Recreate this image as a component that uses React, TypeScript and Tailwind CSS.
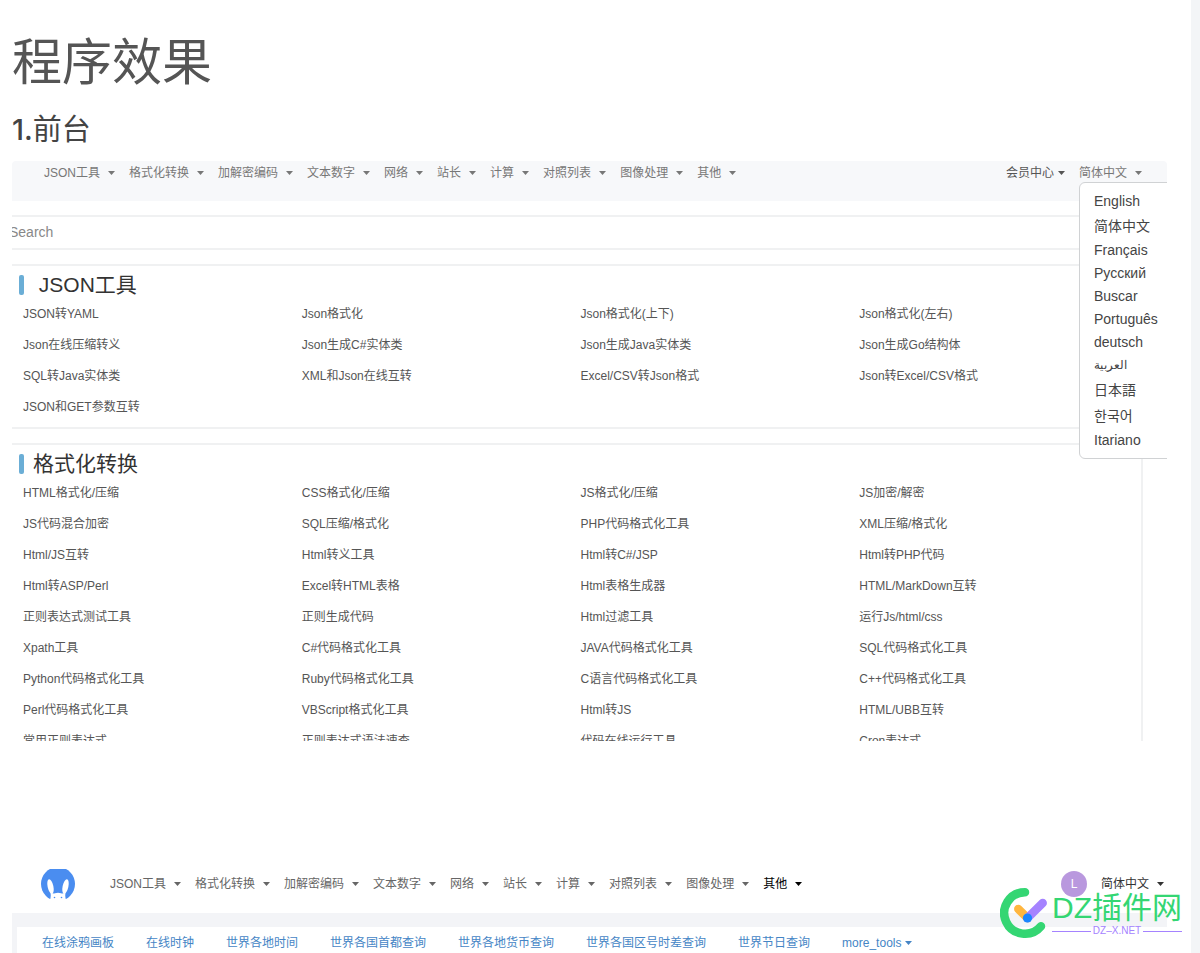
import React from 'react';

type Lang = { label: string; code: string };

const menus = ['JSON工具', '格式化转换', '加解密编码', '文本数字', '网络', '站长', '计算', '对照列表', '图像处理', '其他'];

const languages: Lang[] = [
  { label: 'English', code: 'en' },
  { label: '简体中文', code: 'zh' },
  { label: 'Français', code: 'fr' },
  { label: 'Русский', code: 'ru' },
  { label: 'Buscar', code: 'es' },
  { label: 'Português', code: 'pt' },
  { label: 'deutsch', code: 'de' },
  { label: 'العربية', code: 'ar' },
  { label: '日本語', code: 'ja' },
  { label: '한국어', code: 'ko' },
  { label: 'Itariano', code: 'it' },
];

const jsonTools = [
  'JSON转YAML', 'Json格式化', 'Json格式化(上下)', 'Json格式化(左右)',
  'Json在线压缩转义', 'Json生成C#实体类', 'Json生成Java实体类', 'Json生成Go结构体',
  'SQL转Java实体类', 'XML和Json在线互转', 'Excel/CSV转Json格式', 'Json转Excel/CSV格式',
  'JSON和GET参数互转',
];

const formatTools = [
  'HTML格式化/压缩', 'CSS格式化/压缩', 'JS格式化/压缩', 'JS加密/解密',
  'JS代码混合加密', 'SQL压缩/格式化', 'PHP代码格式化工具', 'XML压缩/格式化',
  'Html/JS互转', 'Html转义工具', 'Html转C#/JSP', 'Html转PHP代码',
  'Html转ASP/Perl', 'Excel转HTML表格', 'Html表格生成器', 'HTML/MarkDown互转',
  '正则表达式测试工具', '正则生成代码', 'Html过滤工具', '运行Js/html/css',
  'Xpath工具', 'C#代码格式化工具', 'JAVA代码格式化工具', 'SQL代码格式化工具',
  'Python代码格式化工具', 'Ruby代码格式化工具', 'C语言代码格式化工具', 'C++代码格式化工具',
  'Perl代码格式化工具', 'VBScript格式化工具', 'Html转JS', 'HTML/UBB互转',
  '常用正则表达式', '正则表达式语法速查', '代码在线运行工具', 'Cron表达式',
];

const otherTools = [
  '在线涂鸦画板', '在线时钟', '世界各地时间', '世界各国首都查询',
  '世界各地货币查询', '世界各国区号时差查询', '世界节日查询',
];

const Caret: React.FC = () => (
  <svg className="h-1 w-[7px] shrink-0" viewBox="0 0 7 4" fill="currentColor" aria-hidden>
    <path d="M0 0h7L3.5 4z" />
  </svg>
);

const Menus: React.FC<{ active?: string }> = ({ active }) => (
  <nav className="flex gap-[14px]">
    {menus.map((m) => (
      <button
        key={m}
        type="button"
        className={`flex items-center gap-2 whitespace-nowrap ${m === active ? 'text-black' : ''}`}
      >
        {m}
        <Caret />
      </button>
    ))}
  </nav>
);

const ToolCard: React.FC<{ title: string; tools: string[] }> = ({ title, tools }) => (
  <section className="mr-6 mb-[14px] border-y-2 border-r-2 border-[#f0f1f2] pt-1 pb-1">
    <h3 className="flex items-center gap-[9px] pl-[7px] text-[21px] leading-[29px] whitespace-pre text-[#333]">
      <span className="h-5 w-[5px] rounded-xs bg-[#6baed6]" />
      {title}
    </h3>
    <ul className="grid grid-cols-4 pr-[3px] pl-[11px] text-xs leading-[31px] text-[#555]">
      {tools.map((t) => (
        <li key={t}>
          <a href="#">{t}</a>
        </li>
      ))}
    </ul>
  </section>
);

const RabbitLogo: React.FC = () => (
  <svg className="h-[30px] w-[34px] shrink-0" viewBox="0 0 34 30" role="img" aria-label="Logo">
    <circle cx="17" cy="15" r="17" fill="#4a8df0" />
    <ellipse cx="9.5" cy="17.500" rx="2.900" ry="7.500" fill="#fff" transform="rotate(-12 9.5 17.500)" />
    <ellipse cx="24.500" cy="17.500" rx="2.900" ry="7.500" fill="#fff" transform="rotate(12 24.500 17.500)" />
    <path fill="#fff" d="M9 22Q11 25.500 14 24.300Q17 23.300 20 24.300Q23 25.500 25 22Q23.500 26 25 31H9Q10.500 26 9 22Z" />
    <circle cx="13.500" cy="28.500" r=".8" fill="#4a8df0" />
    <circle cx="20.500" cy="28.500" r=".8" fill="#4a8df0" />
  </svg>
);

const Watermark: React.FC = () => (
  <div className="absolute right-[9px] bottom-[14px] flex items-center gap-[1px]">
    <svg className="h-[52px] w-[51px]" viewBox="0 0 51 52" fill="none" strokeLinecap="round" strokeWidth="8.500" aria-hidden>
      <path stroke="#34d673" d="M25 5.200A20.800 20.800 0 1 0 41 39.300" />
      <path stroke="#ffb63f" d="M18.300 22l9.200 9" />
      <path stroke="#a583ff" d="M42.700 16l-15.200 15" />
      <circle cx="27.500" cy="31" r="4.600" fill="#1a86ff" />
    </svg>
    <div>
      <p className="text-[30px] leading-9 whitespace-nowrap text-[#34d673]">DZ插件网</p>
      <p className="flex items-center gap-0.5 text-[10px] leading-[10px] whitespace-nowrap text-[#a583ff]">
        <span className="h-px flex-1 bg-[#a583ff]" />
        DZ–X.NET
        <span className="h-px flex-1 bg-[#a583ff]" />
      </p>
    </div>
  </div>
);

const App: React.FC = () => {
  return (
    <div className="relative h-screen overflow-hidden border-r-[9px] border-[#f3f5f7] bg-white pr-6 pl-3 font-['Liberation_Sans','Noto_Sans_CJK_SC',sans-serif]">
      <h1 className="pt-[26px] text-[50px] leading-[74px] text-[#555]">程序效果</h1>
      <h2 className="pt-[10px] pb-3 font-['Inter','Noto_Sans_CJK_SC',sans-serif] text-[29px] leading-[39px] text-[#444]">
        <span className="font-medium">1.</span>前台
      </h2>

      <div className="relative h-[580px] overflow-hidden">
        <header className="flex h-10 items-start justify-between rounded-t-sm bg-[#f7f8fa] pt-1 pr-[25px] pl-8 text-xs leading-4 text-[#777]">
          <Menus />
          <div className="flex gap-[14px]">
            <button type="button" className="flex items-center gap-1 text-[#555]">
              会员中心
              <Caret />
            </button>
            <button type="button" className="flex items-center gap-2">
              简体中文
              <Caret />
            </button>
          </div>
        </header>

        <input
          type="text"
          aria-label="Search"
          placeholder="Search"
          className="-ml-[3px] mt-[14px] mb-[14px] block h-[35px] w-full border-y-2 border-[#f0f1f2] pb-0.5 text-sm placeholder:text-[#888] focus:outline-none"
        />

        <ToolCard title=" JSON工具" tools={jsonTools} />
        <ToolCard title="格式化转换" tools={formatTools} />

        <ul className="absolute top-[21px] -right-2 w-24 rounded-md border border-[#d0d2d4] bg-white pt-[7px] pb-[6px] pl-[14px] text-sm leading-[23px] text-[#444]">
          {languages.map(({ label, code }) => (
            <li
              key={code}
              className={
                code === 'zh' || code === 'ja' || code === 'ko' ? 'leading-[26px]' : code === 'ar' ? 'text-xs leading-[23px]' : ''
              }
            >
              <a href="#" lang={code}>{label}</a>
            </li>
          ))}
        </ul>
      </div>

      <div className="mt-32">
        <header className="flex items-start justify-between pr-[3px] pb-[14px] pl-[29px] text-xs text-[#666]">
          <div className="flex items-center gap-[35px]">
            <RabbitLogo />
            <Menus active="其他" />
          </div>
          <div className="flex items-center gap-[14px] pt-0.5">
            <span className="flex size-[26px] items-center justify-center rounded-full bg-[#b998de] text-white">L</span>
            <button type="button" className="flex items-center gap-2 text-[#333]">
              简体中文
              <Caret />
            </button>
          </div>
        </header>
        <div className="border-t-[14px] border-l-[5px] border-[#f3f4f7] bg-white pb-4">
          <ul className="flex gap-8 pt-2 pl-[25px] text-xs leading-4 whitespace-nowrap text-[#4585c5]">
            {otherTools.map((t) => (
              <li key={t}>
                <a href="#">{t}</a>
              </li>
            ))}
            <li>
              <button type="button" className="flex items-center gap-1">
                more_tools
                <Caret />
              </button>
            </li>
          </ul>
        </div>
      </div>

      <Watermark />
    </div>
  );
};

export default App;
